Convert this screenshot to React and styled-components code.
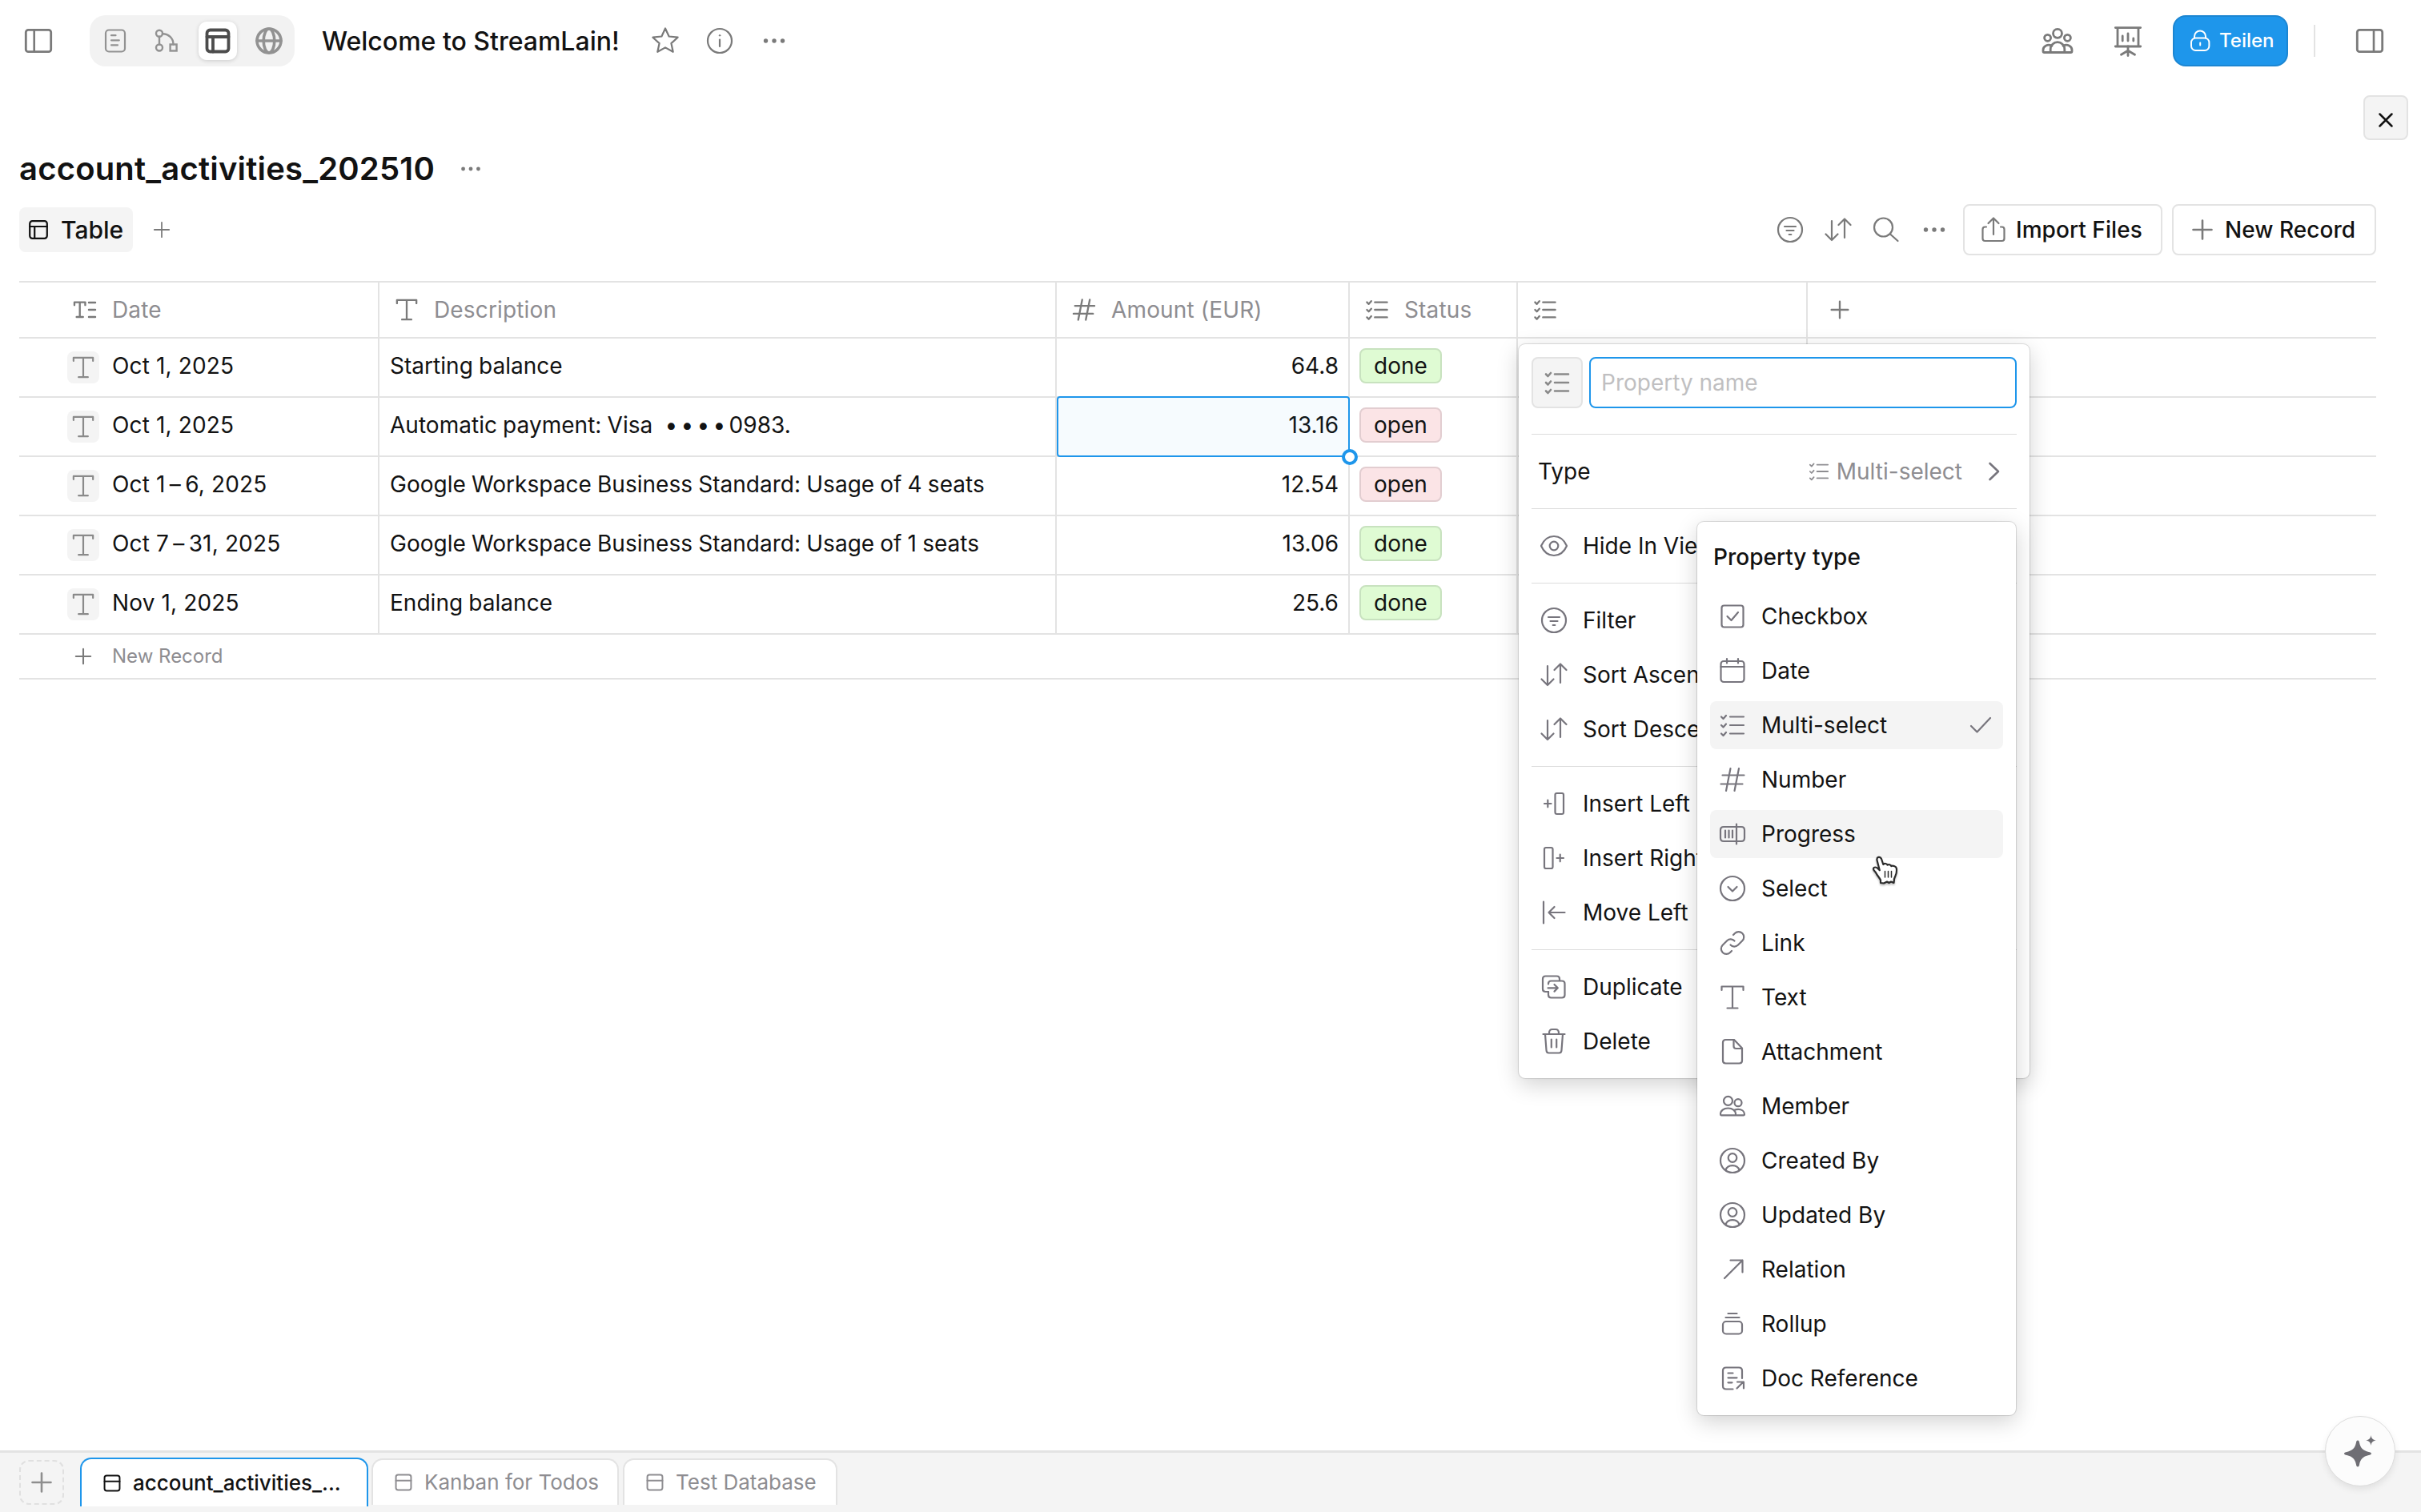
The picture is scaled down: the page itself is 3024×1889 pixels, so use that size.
import React, { useState } from "react";
import styled, { createGlobalStyle, css } from "styled-components";

const GlobalStyle = createGlobalStyle`
  * {
    box-sizing: border-box;
  }
  body {
    margin: 0;
    background: #ffffff;
    color: #121212;
    font-family: Inter, "Liberation Sans", sans-serif;
    font-size: 28px;
  }
`;

const Svg = styled.svg`
  display: block;
  flex: none;
  width: ${(props) => props.$size}px;
  height: ${(props) => props.$size}px;
  fill: none;
  stroke: currentColor;
  stroke-width: ${(props) => props.$stroke};
  stroke-linecap: round;
  stroke-linejoin: round;
  color: ${(props) => props.$color || "inherit"};
`;

const shapes = {
  sidebar: (
    <>
      <rect x="4.3" y="6.3" width="31.4" height="27.4" rx="3" />
      <path d="M14.7 6.3v27.4" strokeWidth="2.6" />
    </>
  ),
  sidebarRight: (
    <>
      <rect x="4.3" y="6.3" width="31.4" height="27.4" rx="3" />
      <path d="M25 6.3v27.4" strokeWidth="2.6" />
    </>
  ),
  doc: (
    <>
      <rect x="8" y="6.5" width="24" height="27" rx="4" />
      <path d="M15 13.2h5.5M15 19.3h9.8M15 25.3h8" />
    </>
  ),
  edgeless: (
    <>
      <circle cx="11" cy="10.7" r="4" />
      <circle cx="11" cy="28.5" r="4" />
      <rect x="24.6" y="24.5" width="8" height="8" strokeLinejoin="miter" />
      <path d="M11 14.7v9.8M15 11.2c7.5 0 13.5 5.5 13.5 13.3" />
    </>
  ),
  table: (
    <>
      <rect x="6.5" y="6.5" width="27" height="27" rx="4" />
      <path d="M6.5 15h27M14 15v18.5" />
    </>
  ),
  globe: (
    <>
      <circle cx="20" cy="20" r="15" />
      <ellipse cx="20" cy="20" rx="6.8" ry="15" />
      <path d="M5 20h30" />
    </>
  ),
  star: (
    <path d="M20 4.500l4.600 10 11 1.200-8.200 7.400 2.300 10.700L20 28.400l-9.700 5.400 2.300-10.700-8.200-7.400 11-1.200z" />
  ),
  info: (
    <>
      <circle cx="20" cy="20" r="15" />
      <path d="M20 18.5v8.5" />
      <circle cx="20" cy="13.3" r="0.8" fill="currentColor" strokeWidth="1" />
    </>
  ),
  more: (
    <g fill="currentColor" stroke="none">
      <circle cx="9.5" cy="20" r="2.7" />
      <circle cx="20" cy="20" r="2.7" />
      <circle cx="30.5" cy="20" r="2.7" />
    </g>
  ),
  people: (
    <>
      <circle cx="20" cy="10.8" r="5.5" />
      <circle cx="7.6" cy="16.3" r="4" />
      <circle cx="32.4" cy="16.3" r="4" />
      <path d="M11.2 34.5v-4a8.8 8.8 0 0 1 17.6 0v4" />
      <path d="M13 26.2c-5-2.5-11 0-11 5.3v1.5q0 1.500 1.500 1.500h33q1.500 0 1.500-1.500v-1.500c0-5.300-6-7.800-11-5.300" />
    </>
  ),
  presentation: (
    <>
      <path d="M4.3 3.6h31.4M4.3 27h31.4M7 4v23M33 4v23" />
      <path d="M13.2 14v6M20 11v9M26.8 17v3M20 27v11.5M20 32.3l-8.5 5M20 32.3l8.5 5" />
    </>
  ),
  lock: (
    <>
      <path d="M9 12.500v-2a7 7 0 0 1 14 0v2" />
      <rect x="5" y="12.5" width="22.4" height="15.5" rx="5.5" />
      <path d="M16.2 18.5v3" />
    </>
  ),
  close: <path d="M7 7l10 10M17 7L7 17" />,
  plus: <path d="M20 8.500v23M8.500 20h23" />,
  filter: (
    <>
      <circle cx="20" cy="20" r="15" />
      <path d="M13 16h14M15.5 21h9M18.7 26h2.6" />
    </>
  ),
  sort: <path d="M12 9v24M4.500 25.500l7.500 7.500 7.500-7.500M28 30V6.500M20.500 14L28 6.500 35.500 14" />,
  search: (
    <>
      <circle cx="16.5" cy="17" r="11.5" />
      <path d="M25 25.5l9.5 8.5" />
    </>
  ),
  share: (
    <path d="M20 26V6.500M13.500 12L20 5.500 26.500 12M11 16.500H9.500q-3 0-3 3V31q0 3 3 3h21q3 0 3-3V19.500q0-3-3-3H29" />
  ),
  text: <path d="M6.500 11V6.500h27V11M20 6.500v27M13.500 33.500h13" />,
  title: (
    <path d="M5.500 13.500V9.500h15v4M13 9.500v20.500M8.500 30h9M25.500 10h9M25.500 20h9M25.500 30h9" />
  ),
  number: <path d="M17.500 6L12 34M28 6l-5.500 28M7.500 14.500h27M5.500 25.500h27" />,
  list: (
    <>
      <path d="M17 9.500h17M17 20h17M17 30.500h17" />
      <path d="M6 9.500l2.500 2.500 3.500-4M6 20l2.500 2.500 3.500-4M6 30.500l2.500 2.500 3.500-4" />
    </>
  ),
  right: <path d="M14.500 10l10.500 10-10.500 10" />,
  eye: (
    <>
      <path d="M4 20c3.500-8 9.500-12 16-12s12.500 4 16 12c-3.500 8-9.500 12-16 12S7.500 28 4 20z" />
      <circle cx="20" cy="20" r="5.3" />
    </>
  ),
  insertLeft: (
    <>
      <rect x="21.5" y="7" width="10.5" height="26" rx="2" />
      <path d="M8 20h8.5M12.3 15.7v8.6" />
    </>
  ),
  insertRight: (
    <>
      <rect x="8" y="7" width="10.5" height="26" rx="2" />
      <path d="M23.5 20h8.5M27.7 15.7v8.6" />
    </>
  ),
  moveLeft: <path d="M7 6.500v27M33.500 20H13.500M20.500 13l-7 7 7 7" />,
  duplicate: (
    <>
      <path d="M13 26h-3.500q-3.500 0-3.500-3.500V10q0-3.500 3.500-3.500h14Q27 6.500 27 10v2" />
      <path d="M13 16.500V16q0-3.500 3.500-3.500h13.500q3.500 0 3.500 3.500v14q0 3.500-3.500 3.500H16.500q-3.500 0-3.500-3.500V26" />
      <path d="M12.500 21.300h12M20.500 17l4.300 4.300-4.300 4.300" />
    </>
  ),
  trash: (
    <>
      <path d="M6.500 11h27M9 11l1.500 20q.2 3.500 3 3.500h13q2.800 0 3-3.500L31 11M14 11V9.500q0-4.500 4-4.500h4q4 0 4 4.500V11" />
      <path d="M16.800 17.500v10M23.200 17.500v10" />
    </>
  ),
  checkbox: (
    <>
      <rect x="6.5" y="6.5" width="27" height="27" rx="3" />
      <path d="M13.5 20l5 5 8.5-10" />
    </>
  ),
  calendar: (
    <>
      <rect x="5.5" y="8" width="29" height="26" rx="3.5" />
      <path d="M5.5 15h29M13 5v5.5M27 5v5.500" />
    </>
  ),
  progress: (
    <>
      <path d="M25 11H9q-4 0-4 4v10q0 4 4 4h16M25 11h6q4 0 4 4v10q0 4-4 4h-6M25 7.500v25" />
      <path d="M11 15.500v9M15.500 15.500v9M20 15.500v9" />
    </>
  ),
  select: (
    <>
      <circle cx="20" cy="20" r="15" />
      <path d="M14.5 18l5.5 5.5 5.5-5.5" />
    </>
  ),
  link: (
    <>
      <path d="M21 10l2-2a6.500 6.500 0 0 1 9.300 9.300l-5.500 5.500a6.500 6.500 0 0 1-9.300-.3" />
      <path d="M19 30l-2 2a6.500 6.500 0 0 1-9.300-9.300l5.500-5.500a6.500 6.500 0 0 1 9.300.3" />
    </>
  ),
  file: (
    <>
      <path d="M11.500 5h10.500L32 15.500V31q0 3.500-3.500 3.500h-17Q8 34.500 8 31V8.500Q8 5 11.500 5z" />
      <path d="M21.500 5v8q0 3 3 3H32" />
    </>
  ),
  member: (
    <>
      <circle cx="14.5" cy="13.3" r="5.5" />
      <circle cx="27" cy="15.7" r="4.5" />
      <path d="M6 31.300q-1 0-1-1.300c0-4.500 4-7.500 9.500-7.500S24 25.500 24 30q0 1.300-1 1.300zM23 31.300h11q1 0 1-1c0-4-3.500-6.500-8-6.500q-2 0-4 .8" />
    </>
  ),
  user: (
    <>
      <circle cx="20" cy="20" r="15" />
      <circle cx="20" cy="16.5" r="5.3" />
      <path d="M11.500 32c1-3.500 4.500-5.800 8.500-5.800s7.500 2.300 8.500 5.800" />
    </>
  ),
  relation: <path d="M10 31L32.500 8.500M17.500 8.500h15v15" />,
  rollup: (
    <>
      <rect x="8" y="17" width="24" height="15.5" rx="4" />
      <path d="M11.500 12h17M14.500 7h11" />
    </>
  ),
  docReference: (
    <>
      <path d="M20.500 33.500H12q-4 0-4-4V10.500q0-4 4-4h16q4 0 4 4V20" />
      <path d="M14.500 13.500h6M14.500 19.300h11M14.500 25.300h5M25.500 32.500l8-8M26 24.500h8v8" />
    </>
  ),
  database: (
    <>
      <rect x="9.5" y="9.5" width="21" height="21" rx="3" />
      <path d="M9.5 17.5h21" />
    </>
  ),
  check: <path d="M8 21l7.500 7.500L32 11" />,
};

// every shape is drawn on a 40 unit grid
function Icon({ name, size = 40, stroke = 2.2, color, box = 40 }) {
  return (
    <Svg viewBox={`0 0 ${box} ${box}`} $size={size} $stroke={stroke} $color={color}>
      {shapes[name]}
    </Svg>
  );
}

const Page = styled.div`
  position: relative;
  width: 3024px;
  height: 1889px;
  display: flex;
  flex-direction: column;
  overflow: hidden;
  line-height: 40px;
`;

const Header = styled.header`
  display: flex;
  align-items: center;
  height: 102px;
  padding: 0 44px 0 28px;
  color: #7a7a7a;
`;

const ModeSwitch = styled.div`
  display: flex;
  gap: 16px;
  margin-left: 44px;
  padding: 8px;
  border-radius: 20px;
  background: #f2f2f2;
`;

const ModeButton = styled.div`
  display: flex;
  align-items: center;
  justify-content: center;
  width: 48px;
  height: 48px;
  border-radius: 10px;
  color: #929292;
  ${(props) =>
    props.$active
      ? css`
          background: #ffffff;
          color: #4c4c4c;
          box-shadow: 0 1px 5px rgba(0, 0, 0, 0.16);
        `
      : null}
`;

const DocTitle = styled.div`
  width: 372px;
  margin: 0 37px 0 34px;
  padding-top: 2px;
  font-size: 32px;
  font-weight: 500;
  color: #121212;
  white-space: nowrap;
`;

const HeaderActions = styled.div`
  display: flex;
  gap: ${(props) => props.$gap}px;
`;

const Spacer = styled.div`
  flex: 1;
`;

const ShareButton = styled.div`
  display: flex;
  align-items: center;
  gap: 8px;
  width: 144px;
  height: 64px;
  margin-left: 36px;
  padding-left: 16px;
  border: 2px solid #1c86d2;
  border-radius: 16px;
  background: #1e96eb;
  color: #ffffff;
  font-size: 24px;
  font-weight: 500;
`;

const HeaderDivider = styled.div`
  width: 2px;
  height: 40px;
  margin: 0 48px 0 32px;
  background: #e3e3e3;
`;

const CloseRow = styled.div`
  display: flex;
  justify-content: flex-end;
  padding: 17px 16px 0 0;
`;

const CloseButton = styled.div`
  display: flex;
  align-items: center;
  justify-content: center;
  width: 56px;
  height: 56px;
  padding-top: 5px;
  border: 2px solid #e3e3e3;
  border-radius: 8px;
  background: #f4f4f4;
`;

const Main = styled.main`
  flex: 1;
  padding: 0 56px 0 24px;
`;

const TitleRow = styled.div`
  display: flex;
  align-items: center;
  gap: 27px;
  height: 60px;
  margin-top: 6px;
  color: #7a7a7a;
`;

const DatabaseTitle = styled.h1`
  margin: 0;
  font-size: 40px;
  font-weight: 600;
  letter-spacing: 0.19px;
  color: #121212;
`;

const Toolbar = styled.div`
  display: flex;
  align-items: center;
  height: 64px;
  margin-top: 14px;
  color: #7a7a7a;
`;

const ViewTab = styled.div`
  display: flex;
  align-items: center;
  gap: 12px;
  width: 142px;
  height: 56px;
  margin-right: 20px;
  padding-left: 8px;
  border-radius: 8px;
  background: #f4f4f4;
  color: #121212;
  font-size: 30px;
  font-weight: 500;
`;

const ToolbarIcons = styled.div`
  display: flex;
  gap: 20px;
  margin-right: 16px;
`;

const ToolbarButton = styled.div`
  display: flex;
  align-items: center;
  gap: 8px;
  width: ${(props) => props.$width}px;
  height: 64px;
  margin-right: ${(props) => props.$space || 0}px;
  padding-left: 16px;
  border: 2px solid #e3e3e3;
  border-radius: 8px;
  font-weight: 500;
  span {
    color: #121212;
    letter-spacing: 0.05px;
  }
`;

const columns = "450px 846px 366px 210px 362px 1fr";

const Table = styled.div`
  margin-top: 32px;
  border-top: 2px solid #e3e3e3;
`;

const HeadRow = styled.div`
  display: grid;
  grid-template-columns: ${columns};
  height: 70px;
  border-bottom: 2px solid #e3e3e3;
`;

const HeadCell = styled.div`
  display: flex;
  align-items: center;
  gap: 16px;
  padding-left: ${(props) => props.$pad}px;
  border-right: ${(props) => (props.$last ? "none" : "2px solid #e3e3e3")};
  color: #8e8d91;
  letter-spacing: 0.15px;
`;

const Row = styled(HeadRow)`
  height: 74px;
`;

const Cell = styled.div`
  position: relative;
  display: flex;
  align-items: center;
  justify-content: ${(props) => (props.$right ? "flex-end" : "flex-start")};
  padding: 0 12px 4px ${(props) => props.$pad || 13}px;
  border-right: ${(props) => (props.$last ? "none" : "2px solid #e3e3e3")};
  white-space: pre;
`;

const DateCell = styled(Cell)`
  letter-spacing: 0.15px;
`;

const DescriptionCell = styled(Cell)`
  letter-spacing: 0.03px;
  word-spacing: -0.8px;
`;

const TitleIcon = styled.div`
  display: flex;
  align-items: center;
  justify-content: center;
  width: 40px;
  height: 40px;
  margin: 4px 16px 0 0;
  border-radius: 8px;
  background: #f4f4f4;
  color: #8a8a8a;
`;

const Tag = styled.div`
  height: 44px;
  padding: 0 16px;
  border: 2px solid ${(props) => (props.$tone === "done" ? "#c8e2bf" : "#e2cdd0")};
  border-radius: 8px;
  background: ${(props) => (props.$tone === "done" ? "#dffbd3" : "#fbe4e6")};
`;

const Selection = styled.div`
  position: absolute;
  inset: -2px -2px -2px 0;
  border: 2px solid #1e96eb;
  border-radius: 4px;
  background: rgba(30, 150, 235, 0.04);
`;

const FillHandle = styled.div`
  position: absolute;
  right: -12px;
  bottom: -12px;
  width: 20px;
  height: 20px;
  border: 4px solid #1e96eb;
  border-radius: 50%;
  background: #ffffff;
  z-index: 1;
`;

const Bullets = styled.span`
  margin-left: 8px;
  letter-spacing: 4.3px;
`;

const AddRow = styled.div`
  display: flex;
  align-items: center;
  gap: 20px;
  height: 56px;
  padding-left: 64px;
  border-bottom: 2px solid #e3e3e3;
  color: #8e8d91;
  font-size: 24px;
`;

const Footer = styled.footer`
  display: flex;
  align-items: flex-start;
  height: 77px;
  padding-left: 24px;
  border-top: 3px solid #e3e3e3;
  background: #f4f4f4;
`;

const AddTab = styled.div`
  display: flex;
  align-items: center;
  justify-content: center;
  width: 56px;
  height: 56px;
  margin: 9px 20px 0 0;
  border: 2px dashed #e0e0e0;
  border-radius: 12px;
  color: #8e8e8e;
`;

const Tab = styled.div`
  display: flex;
  align-items: center;
  gap: 8px;
  width: ${(props) => props.$width}px;
  height: 58px;
  margin: 7px 5px 0 0;
  padding-left: 20px;
  border: 2px solid #e3e3e3;
  border-bottom: none;
  border-radius: 14px 14px 0 0;
  background: #ffffff;
  color: #8e8d91;
  font-size: 26px;
  white-space: nowrap;
  ${(props) =>
    props.$active
      ? css`
          height: 61px;
          margin-top: 6px;
          margin-right: 4px;
          border-color: #1e96eb;
          color: #121212;
          font-weight: 500;
        `
      : null}
`;

const AiButton = styled.div`
  position: absolute;
  left: 2904px;
  top: 1769px;
  display: flex;
  align-items: center;
  justify-content: center;
  width: 88px;
  height: 88px;
  border: 1px solid #dcdcdc;
  border-radius: 50%;
  background: #fcfcfc;
  box-shadow: 0 4px 8px rgba(0, 0, 0, 0.08);
`;

const Popup = styled.div`
  position: absolute;
  left: ${(props) => props.$x}px;
  top: ${(props) => props.$y}px;
  width: ${(props) => props.$width}px;
  padding: 16px;
  border-radius: 8px;
  background: #ffffff;
  box-shadow: 0 0 0 1px rgba(0, 0, 0, 0.08), 0 0 2px rgba(0, 0, 0, 0.16), 0 8px 28px rgba(0, 0, 0, 0.18);
`;

const NameRow = styled.div`
  display: flex;
  gap: 8px;
  padding-bottom: 32px;
`;

const TypeBadge = styled.div`
  display: flex;
  align-items: center;
  justify-content: center;
  width: 64px;
  height: 64px;
  border: 2px solid #e3e3e3;
  border-radius: 8px;
  background: #f4f4f4;
  color: #8a8a8a;
`;

const NameInput = styled.input`
  flex: 1;
  min-width: 0;
  height: 64px;
  padding: 0 13px;
  border: 2px solid #1e96eb;
  border-radius: 8px;
  outline: none;
  font: inherit;
  &::placeholder {
    color: #c0bfc1;
    opacity: 1;
  }
`;

const MenuDivider = styled.div`
  height: 1px;
  margin-bottom: 16px;
  background: #dcdcdc;
`;

const MenuGroup = styled.div`
  display: flex;
  flex-direction: column;
  gap: 8px;
  padding-bottom: ${(props) => (props.$last ? 0 : 16)}px;
`;

const MenuItem = styled.div`
  display: flex;
  align-items: center;
  gap: 16px;
  height: 60px;
  padding: 0 8px;
  border-radius: 8px;
  background: ${(props) => (props.$active ? "#f4f4f4" : "transparent")};
  color: #77757d;
  white-space: nowrap;
  span {
    color: #121212;
  }
`;

const TypeValue = styled.div`
  display: flex;
  align-items: center;
  gap: 6px;
  margin-left: auto;
  color: #8e8d91;
  b {
    margin-right: 14px;
    font-weight: 400;
  }
`;

const MenuTitle = styled.div`
  height: 72px;
  padding: 8px 4px 0;
  font-weight: 500;
`;

const Cursor = styled.svg`
  position: absolute;
  left: 2338px;
  top: 1068px;
  width: 36px;
  height: 40px;
  filter: drop-shadow(0 2px 1px rgba(0, 0, 0, 0.25));
`;

const heads = [
  { icon: "title", label: "Date", pad: 64 },
  { icon: "text", label: "Description", pad: 16 },
  { icon: "number", label: "Amount (EUR)", pad: 16 },
  { icon: "list", label: "Status", pad: 16 },
  { icon: "list", label: "", pad: 16 },
];

const records = [
  { date: "Oct 1, 2025", description: "Starting balance", amount: "64.8", status: "done" },
  { date: "Oct 1, 2025", card: "0983.", description: "Automatic payment: Visa ", amount: "13.16", status: "open", selected: true },
  { date: "Oct 1\u2009–\u20096, 2025", description: "Google Workspace Business Standard: Usage of 4 seats", amount: "12.54", status: "open" },
  { date: "Oct 7\u2009–\u200931, 2025", description: "Google Workspace Business Standard: Usage of 1 seats", amount: "13.06", status: "done" },
  { date: "Nov 1, 2025", description: "Ending balance", amount: "25.6", status: "done" },
];

const actionGroups = [
  [["eye", "Hide In View"]],
  [["filter", "Filter"], ["sort", "Sort Ascending"], ["sort", "Sort Descending"]],
  [["insertLeft", "Insert Left"], ["insertRight", "Insert Right"], ["moveLeft", "Move Left"]],
  [["duplicate", "Duplicate"], ["trash", "Delete"]],
];

const propertyTypes = [
  ["checkbox", "Checkbox"],
  ["calendar", "Date"],
  ["list", "Multi-select"],
  ["number", "Number"],
  ["progress", "Progress"],
  ["select", "Select"],
  ["link", "Link"],
  ["text", "Text"],
  ["file", "Attachment"],
  ["member", "Member"],
  ["user", "Created By"],
  ["user", "Updated By"],
  ["relation", "Relation"],
  ["rollup", "Rollup"],
  ["docReference", "Doc Reference"],
];

function TopBar() {
  return (
    <Header>
      <Icon name="sidebar" stroke={2.8} />
      <ModeSwitch>
        <ModeButton><Icon name="doc" /></ModeButton>
        <ModeButton><Icon name="edgeless" stroke={2.4} /></ModeButton>
        <ModeButton $active><Icon name="table" stroke={3.8} /></ModeButton>
        <ModeButton><Icon name="globe" stroke={3.6} /></ModeButton>
      </ModeSwitch>
      <DocTitle>Welcome to StreamLain!</DocTitle>
      <HeaderActions $gap={28}>
        <Icon name="star" />
        <Icon name="info" />
        <Icon name="more" />
      </HeaderActions>
      <Spacer />
      <HeaderActions $gap={48}>
        <Icon name="people" stroke={2.8} />
        <Icon name="presentation" stroke={2.8} />
      </HeaderActions>
      <ShareButton>
        <Icon name="lock" size={32} box={32} stroke={2} />
        Teilen
      </ShareButton>
      <HeaderDivider />
      <Icon name="sidebarRight" stroke={2.8} />
    </Header>
  );
}

function RecordRow({ record }) {
  return (
    <Row>
      <DateCell $pad={60}>
        <TitleIcon><Icon name="text" size={36} stroke={2.4} /></TitleIcon>
        {record.date}
      </DateCell>
      <DescriptionCell>
        {record.description}
        {record.card ? (<><Bullets>••••</Bullets>{record.card}</>) : null}
      </DescriptionCell>
      <Cell $right>
        {record.selected ? (<><Selection /><FillHandle /></>) : null}
        {record.amount}
      </Cell>
      <Cell $pad={12}>
        <Tag $tone={record.status}>{record.status}</Tag>
      </Cell>
      <Cell />
      <Cell $last />
    </Row>
  );
}

function PropertyMenu() {
  const [name, setName] = useState("");

  return (
    <Popup $x={1897} $y={430} $width={638}>
      <NameRow>
        <TypeBadge><Icon name="list" stroke={2.6} /></TypeBadge>
        <NameInput placeholder="Property name" value={name} onChange={(e) => setName(e.target.value)} />
      </NameRow>
      <MenuDivider />
      <MenuGroup>
        <MenuItem>
          <span>Type</span>
          <TypeValue>
            <Icon name="list" size={32} />
            <b>Multi-select</b>
            <Icon name="right" color="#77757d" stroke={2.6} />
          </TypeValue>
        </MenuItem>
      </MenuGroup>
      {actionGroups.map((group, index) => (
        <React.Fragment key={index}>
          <MenuDivider />
          <MenuGroup $last={index === actionGroups.length - 1}>
            {group.map(([icon, label]) => (
              <MenuItem key={label}>
                <Icon name={icon} />
                <span>{label}</span>
              </MenuItem>
            ))}
          </MenuGroup>
        </React.Fragment>
      ))}
    </Popup>
  );
}

function TypeMenu() {
  return (
    <Popup $x={2120} $y={652} $width={398}>
      <MenuTitle>Property type</MenuTitle>
      <MenuGroup $last>
        {propertyTypes.map(([icon, label]) => (
          <MenuItem key={label} $active={label === "Multi-select" || label === "Progress"}>
            <Icon name={icon} />
            <span>{label}</span>
            {label === "Multi-select" ? (<><Spacer /><Icon name="check" /></>) : null}
          </MenuItem>
        ))}
      </MenuGroup>
    </Popup>
  );
}

function App() {
  return (
    <Page>
      <GlobalStyle />
      <TopBar />
      <CloseRow>
        <CloseButton><Icon name="close" size={36} box={24} stroke={1.7} /></CloseButton>
      </CloseRow>
      <Main>
        <TitleRow>
          <DatabaseTitle>account_activities_202510</DatabaseTitle>
          <Icon name="more" size={36} />
        </TitleRow>
        <Toolbar>
          <ViewTab>
            <Icon name="table" size={32} stroke={2.8} />
            Table
          </ViewTab>
          <Icon name="plus" size={32} />
          <Spacer />
          <ToolbarIcons>
            <Icon name="filter" />
            <Icon name="sort" />
            <Icon name="search" />
            <Icon name="more" />
          </ToolbarIcons>
          <ToolbarButton $width={249} $space={12}>
            <Icon name="share" />
            <span>Import Files</span>
          </ToolbarButton>
          <ToolbarButton $width={255}>
            <Icon name="plus" stroke={2.6} />
            <span>New Record</span>
          </ToolbarButton>
        </Toolbar>
        <Table>
          <HeadRow>
            {heads.map((head, index) => (
              <HeadCell key={index} $pad={head.pad}>
                <Icon name={head.icon} size={36} stroke={2.6} color="#7a7a7a" />
                {head.label}
              </HeadCell>
            ))}
            <HeadCell $last $pad={22}>
              <Icon name="plus" size={36} stroke={2.6} color="#7a7a7a" />
            </HeadCell>
          </HeadRow>
          {records.map((record, index) => (
            <RecordRow key={index} record={record} />
          ))}
          <AddRow>
            <Icon name="plus" size={32} stroke={2.6} color="#7a7a7a" />
            New Record
          </AddRow>
        </Table>
      </Main>
      <Footer>
        <AddTab><Icon name="plus" stroke={2.6} /></AddTab>
        <Tab $active $width={360}><Icon name="database" size={36} />account_activities_...</Tab>
        <Tab $width={309}><Icon name="database" size={36} />Kanban for Todos</Tab>
        <Tab $width={268}><Icon name="database" size={36} />Test Database</Tab>
      </Footer>
      <AiButton>
        <svg width="48" height="48" viewBox="0 0 48 48" fill="#6f6e74">
          <path d="M21 10.500c1.300 0 1.700 1 2 2.800 1.300 6.700 4.500 10 11.700 11.700 1.800.3 3.300.8 3.300 2s-1.500 1.700-3.300 2C27.500 30.700 24.300 34 23 40.700c-.3 1.800-.7 2.800-2 2.800s-1.700-1-2-2.800C17.700 34 14.500 30.700 7.300 29c-1.800-.3-3.300-.8-3.300-2s1.500-1.700 3.300-2C14.500 23.300 17.700 20 19 13.300c.3-1.800.7-2.800 2-2.800z" />
          <path d="M37.500 4c.6 4.200 2.300 5.900 6.500 6.500-4.200.6-5.900 2.300-6.500 6.500-.6-4.200-2.300-5.900-6.500-6.500 4.200-.6 5.900-2.300 6.500-6.500z" />
        </svg>
      </AiButton>
      <PropertyMenu />
      <TypeMenu />
      <Cursor viewBox="0 0 36 40" fill="#ffffff" stroke="#2b2b2b" strokeWidth="2.2" strokeLinejoin="round" strokeLinecap="round">
        <path d="M11 35v-3.500c-1.500-3-4-5.500-5.500-8.500C4.500 20.500 1.500 19.500 2 17c.6-2 3.500-2 5.500 0l2.300 2.300L6.600 7C5.500 2.500 10.500 1.300 12 5l2.300 7c1.500-1.600 4.500-1.300 5.200.7 1.500-1.200 4.300-.6 4.800 1.400 1.600-1 5.700-.2 6.500 2.500.5 3.500.2 6.500-1.300 9.500-1.500 2.500-2 5-2 8.900l-3.500-1.500-2.500 1.500-2.500-1.500-4 2z" />
        <path d="M16.500 20.500v7.500M20.500 20.500v7.500M24.500 20.500v7.500" strokeWidth="1.500" />
      </Cursor>
    </Page>
  );
}

export default App;
